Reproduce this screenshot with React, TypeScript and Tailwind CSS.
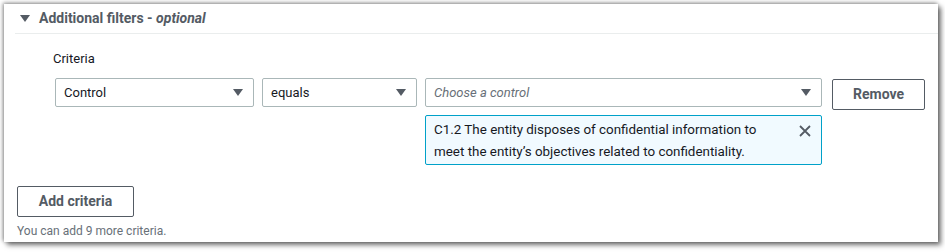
import React from "react";

const Caret = () => (
  <svg width="10" height="8" viewBox="0 0 10 8" className="shrink-0">
    <path d="M0 0 L10 0 L5 7 Z" fill="#545b64" />
  </svg>
);

export default function App() {
  return (
    <div className="w-[945px] h-[252px] bg-white pt-[4px] pl-[4px]" style={{ fontFamily: 'Roboto, "Noto Sans", sans-serif' }}>
      <div className="w-[934px] h-[238px] bg-white shadow-[3px_3px_5px_rgba(0,0,0,0.55),-1px_-1px_4px_rgba(0,0,0,0.45)] flex flex-col">
        <div className="flex items-center h-[29px] pl-[16px] gap-[9px] text-[14px] text-[#545b64] font-bold">
          <svg width="10" height="8" viewBox="0 0 10 8">
            <path d="M0 0 L10 0 L5 7 Z" fill="#545b64" />
          </svg>
          <span>
            Additional filters - <i className="font-bold">optional</i>
          </span>
        </div>
        <div className="ml-[11px] h-px bg-[#eaeded]" />
        <div className="pl-[49px] pt-[14px] text-[13px] text-[#16191f] leading-[22px]">Criteria</div>
        <div className="flex items-start pl-[51px] mt-[8px]">
          <div className="w-[199px] h-[29px] border border-[#aab7b8] rounded-[2px] flex items-center justify-between pl-[8px] pr-[10px] text-[13px] text-[#16191f]">
            <span>Control</span>
            <Caret />
          </div>
          <div className="ml-[8px] w-[155px] h-[29px] border border-[#aab7b8] rounded-[2px] flex items-center justify-between pl-[8px] pr-[10px] text-[13px] text-[#16191f]">
            <span>equals</span>
            <Caret />
          </div>
          <div className="ml-[8px] w-[397px] flex flex-col gap-[8px]">
            <div className="h-[29px] border border-[#aab7b8] rounded-[2px] flex items-center justify-between pl-[8px] pr-[10px] text-[13px] text-[#687078] italic">
              <span>Choose a control</span>
              <Caret />
            </div>
            <div className="h-[50px] border border-[#00a1c9] bg-[#f1faff] rounded-[2px] flex justify-between pl-[8px] pr-[8px] pt-[3px] text-[13.4px] leading-[22px] text-[#16191f]">
              <span className="w-[345px]">C1.2 The entity disposes of confidential information to meet the entity’s objectives related to confidentiality.</span>
              <svg width="12" height="12" viewBox="0 0 12 12" className="mt-[6px] mr-[2px]">
                <path d="M1 1 L11 11 M11 1 L1 11" stroke="#545b64" strokeWidth="1.8" />
              </svg>
            </div>
          </div>
          <button className="ml-[10px] mt-[1px] w-[93px] h-[31px] border border-[#545b64] rounded-[2px] text-[14px] font-bold text-[#545b64] bg-white">
            Remove
          </button>
        </div>
        <div className="pl-[13px] mt-[21px]">
          <button className="w-[117px] h-[31px] border border-[#545b64] rounded-[2px] text-[14px] font-bold text-[#545b64] bg-white">
            Add criteria
          </button>
        </div>
        <div className="pl-[13px] mt-[5px] text-[12px] leading-[18px] text-[#687078]">You can add 9 more criteria.</div>
      </div>
    </div>
  );
}
